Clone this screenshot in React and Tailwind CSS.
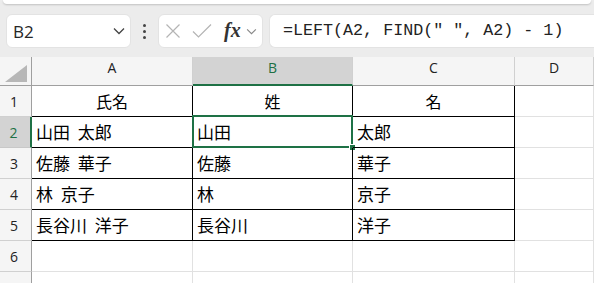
import React from 'react';

const colLetters = ['A', 'B', 'C', 'D'];

const sheet = [
  ['氏名', '姓', '名'],
  ['山田 太郎', '山田', '太郎'],
  ['佐藤 華子', '佐藤', '華子'],
  ['林 京子', '林', '京子'],
  ['長谷川 洋子', '長谷川', '洋子'],
  [],
  [],
];

const uiFont = { fontFamily: '"Open Sans", "Noto Sans", sans-serif' };

function Chevron({ className }) {
  return (
    <svg viewBox="0 0 12 8" className={className} fill="none" stroke="currentColor" strokeWidth="1.3">
      <path d="M1 1.5 L6 6.5 L11 1.5" />
    </svg>
  );
}

function FormulaBar() {
  return (
    <div className="flex items-start h-[53px] pt-[10px] pl-[6px] gap-0">
      {/* name box */}
      <div className="w-[125px] h-[34px] bg-white rounded-md border border-[#e3e3e3] flex items-center pl-[6px] pr-[5px] justify-between">
        <span className="text-[17px] text-[#262626] leading-none" style={uiFont}>B2</span>
        <Chevron className="w-[12px] h-[8px] text-[#444]" />
      </div>
      {/* kebab */}
      <div className="w-[27px] h-[34px] flex flex-col items-center justify-center gap-[3px]">
        <span className="block w-[3px] h-[3px] rounded-full bg-[#444]"></span>
        <span className="block w-[3px] h-[3px] rounded-full bg-[#444]"></span>
        <span className="block w-[3px] h-[3px] rounded-full bg-[#444]"></span>
      </div>
      {/* cancel / enter / fx */}
      <div className="w-[105px] h-[34px] bg-white rounded-md border border-[#e3e3e3] flex items-center pl-[6px]">
        <svg viewBox="0 0 16 16" className="w-[16px] h-[16px] text-[#b4b4b4]" fill="none" stroke="currentColor" strokeWidth="1.2">
          <path d="M1.5 1.5 L14.5 14.5 M14.5 1.5 L1.5 14.5" />
        </svg>
        <svg viewBox="0 0 20 16" className="w-[20px] h-[16px] ml-[11px] text-[#b4b4b4]" fill="none" stroke="currentColor" strokeWidth="1.2">
          <path d="M1 8.5 L6.5 14 L19 1.5" />
        </svg>
        <span className="ml-[12px] text-[20px] italic font-bold leading-none text-[#333] pb-[3px]" style={{ fontFamily: '"Liberation Serif", serif' }}>fx</span>
        <Chevron className="ml-[5px] w-[11px] h-[7px] text-[#888]" />
      </div>
      {/* formula */}
      <div className="ml-[6px] flex-1 h-[34px] bg-white rounded-l-md border border-r-0 border-[#e3e3e3] flex items-center pl-[13px]">
        <span className="text-[16.7px] text-[#222] whitespace-pre leading-none" style={{ fontFamily: '"Liberation Mono", monospace' }}>
          =LEFT(A2, FIND(" ", A2) - 1)
        </span>
      </div>
    </div>
  );
}

function ColumnHeaders() {
  return (
    <>
      <div className="relative bg-[#f5f5f5] border-r border-b border-[#9f9f9f]">
        <svg viewBox="0 0 22 17" className="absolute right-[4px] bottom-[3px] w-[22px] h-[17px]">
          <path d="M22 0 L22 17 L0 17 Z" fill="#b7b7b7" />
        </svg>
      </div>
      {colLetters.map((c) =>
        c === 'B' ? (
          <div key={c} className="bg-[#d3d3d3] border-r border-r-[#d0d0d0] border-b-2 border-b-[#1e7145] flex items-center justify-center pb-[6px] text-[14px] text-[#1e7145]" style={uiFont}>
            {c}
          </div>
        ) : (
          <div key={c} className="bg-[#f5f5f5] border-r border-r-[#d0d0d0] border-b border-b-[#9f9f9f] flex items-center justify-center pb-[7px] text-[14px] text-[#222]" style={uiFont}>
            {c}
          </div>
        )
      )}
    </>
  );
}

export default function App() {
  return (
    <div className="w-[594px] h-[283px] overflow-hidden bg-[#ececec]">
      <div className="mx-[3px] h-[4px] bg-white rounded-b-md shadow-[0_1px_2px_rgba(0,0,0,0.18)]"></div>
      <FormulaBar />
      <div className="grid grid-cols-[32px_161px_160px_162px_1fr] grid-rows-[29px_repeat(7,31px)] bg-white">
        <ColumnHeaders />
        {sheet.map((row, r) => (
          <React.Fragment key={r}>
            {r === 1 ? (
              <div className="bg-[#d3d3d3] border-r-2 border-r-[#1e7145] border-b border-b-[#c8c8c8] flex items-center justify-center pr-[3px] text-[14px] text-[#1e7145]" style={uiFont}>
                {r + 1}
              </div>
            ) : (
              <div className="bg-[#f5f5f5] border-r border-r-[#9f9f9f] border-b border-b-[#d0d0d0] flex items-center justify-center pr-[3px] text-[14px] text-[#222]" style={uiFont}>
                {r < 6 ? r + 1 : ''}
              </div>
            )}
            {colLetters.map((c, ci) => {
              const inTable = r < 5 && ci < 3;
              const text = row[ci] || '';
              const cellFont = { fontFamily: '"Noto Sans CJK JP", sans-serif' };
              if (!inTable) {
                return <div key={c} className="border-r border-b border-[#e1e1e1]"></div>;
              }
              return (
                <div
                  key={c}
                  className={
                    r === 0
                      ? 'relative border-r border-b border-black flex items-center justify-center text-[16px] text-black'
                      : 'relative border-r border-b border-black flex items-center pl-[4px] text-[17px] text-black [word-spacing:4px]'
                  }
                  style={cellFont}
                >
                  {text}
                  {r === 1 && ci === 1 && (
                    <>
                      <div className="absolute -left-[1px] -top-[2px] -right-[1px] -bottom-[1px] border-2 border-[#1e7145] pointer-events-none"></div>
                      <div className="absolute -right-[4px] -bottom-[4px] w-[7px] h-[7px] bg-[#1e7145] border border-white"></div>
                    </>
                  )}
                </div>
              );
            })}
          </React.Fragment>
        ))}
      </div>
    </div>
  );
}
